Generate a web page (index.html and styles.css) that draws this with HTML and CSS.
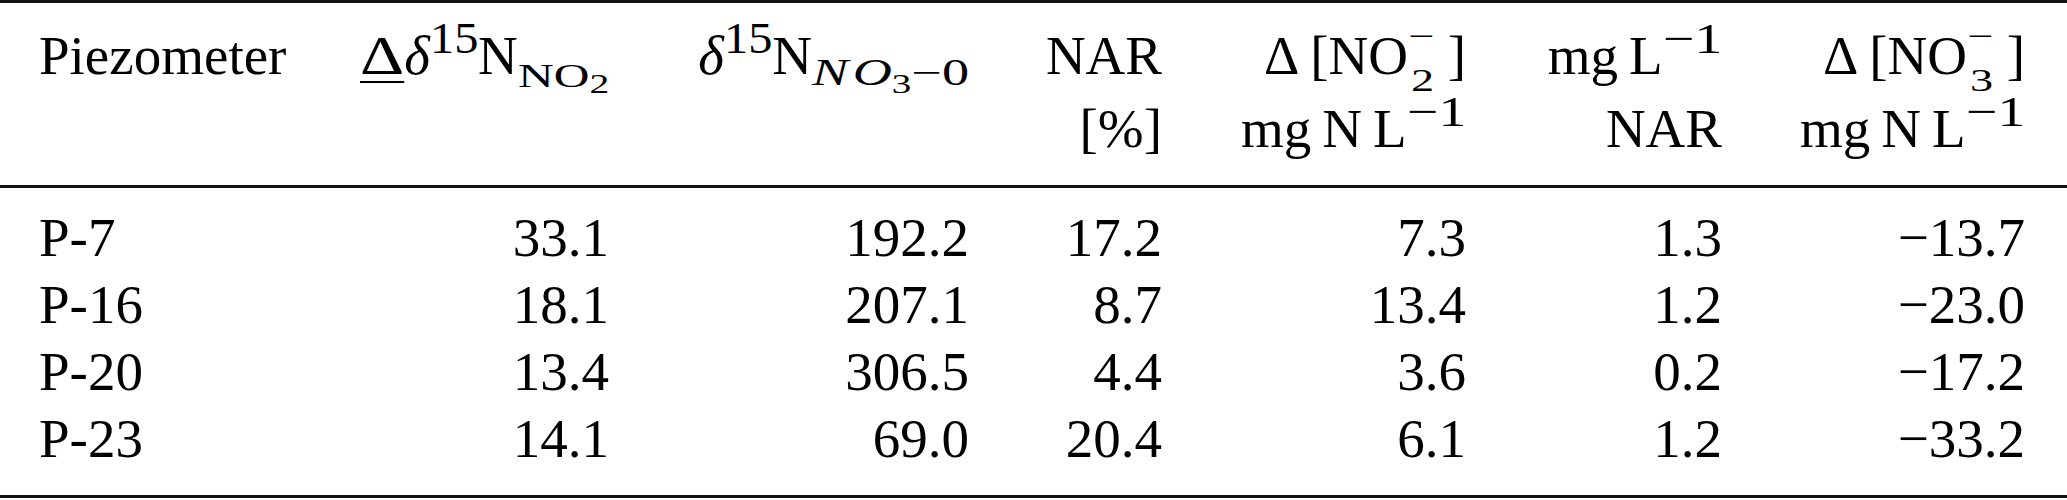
FILE: index.html
```html
<!DOCTYPE html>
<html lang="en">
<head>
  <meta charset="UTF-8">
  <title>Piezometer nitrite table</title>
  <link rel="stylesheet" href="styles.css">
</head>
<body>

  <table class="data-table">
    <colgroup>
      <col class="c1">
      <col class="c2">
      <col class="c3">
      <col class="c4">
      <col class="c5">
      <col class="c6">
      <col class="c7">
    </colgroup>
    <thead>
      <tr>
        <th class="first">Piezometer</th>
        <th><span class="ul">&Delta;</span><i>&delta;</i><sup class="iso">15</sup>N<sub class="sub-no">NO<sub>2</sub></sub></th>
        <th><i>&delta;</i><sup class="iso">15</sup>N<sub class="sub-no3"><i>N&#8202;O</i><sub>3</sub>&minus;0</sub></th>
        <th>NAR<br>[%]</th>
        <th>&Delta; [NO<span class="ion"><span>&minus;</span><span>2</span></span>&nbsp;]<br>mg&thinsp;N&thinsp;L<sup>&minus;1</sup></th>
        <th>mg&thinsp;L<sup>&minus;1</sup><br>NAR</th>
        <th class="last">&Delta; [NO<span class="ion"><span>&minus;</span><span>3</span></span>&nbsp;]<br>mg&thinsp;N&thinsp;L<sup>&minus;1</sup></th>
      </tr>
    </thead>
    <tbody>
      <tr>
        <td class="first">P-7</td>
        <td>33.1</td>
        <td>192.2</td>
        <td>17.2</td>
        <td>7.3</td>
        <td>1.3</td>
        <td class="last">&minus;13.7</td>
      </tr>
      <tr>
        <td class="first">P-16</td>
        <td>18.1</td>
        <td>207.1</td>
        <td>8.7</td>
        <td>13.4</td>
        <td>1.2</td>
        <td class="last">&minus;23.0</td>
      </tr>
      <tr>
        <td class="first">P-20</td>
        <td>13.4</td>
        <td>306.5</td>
        <td>4.4</td>
        <td>3.6</td>
        <td>0.2</td>
        <td class="last">&minus;17.2</td>
      </tr>
      <tr>
        <td class="first">P-23</td>
        <td>14.1</td>
        <td>69.0</td>
        <td>20.4</td>
        <td>6.1</td>
        <td>1.2</td>
        <td class="last">&minus;33.2</td>
      </tr>
    </tbody>
  </table>

</body>
</html>
```

FILE: styles.css
```css
/* General */
body {
  margin: 0;
  background-color: #fff;
  color: #000;
  font-family: "Liberation Serif", "Times New Roman", serif;
}

/* Table */
.data-table {
  width: 2067px;
  table-layout: fixed;
  border-collapse: separate;
  border-spacing: 0;
  font-size: 55px;
}

.c1 { width: 300px; }
.c2 { width: 309px; }
.c3 { width: 360px; }
.c4 { width: 193px; }
.c5 { width: 304px; }
.c6 { width: 256px; }
.c7 { width: 345px; }

.data-table th,
.data-table td {
  padding: 0;
  text-align: right;
  vertical-align: top;
  font-weight: normal;
  white-space: nowrap;
}

.data-table .first {
  padding-left: 39px;
  text-align: left;
}

.data-table .last {
  padding-right: 42px;
}

/* Header */
.data-table thead th {
  line-height: 73px;
  padding-top: 16px;
  padding-bottom: 20px;
  border-top: 3px solid #111;
  border-bottom: 3px solid #111;
}

/* script glyphs in the source are drawn wide, so stretch them;
   margin-right gives back the extra width to the layout */
.data-table sup,
.data-table sub,
.ion,
.ul {
  display: inline-block;
  line-height: 0;
  transform-origin: 0 0;
}

.data-table sup {
  font-size: 0.78em;
  vertical-align: 21px;
  transform: scaleX(1.3);
  margin-right: 0.32em;
}

.data-table sup.iso {
  font-size: 0.8em;
  transform: scaleX(1.1);
  margin-right: 0.1em;
}

.data-table sub {
  vertical-align: -13px;
  transform: scaleX(1.45);
}

.data-table sub.sub-no {
  font-size: 0.62em;
  margin-right: 0.83em;
}

.data-table sub.sub-no3 {
  font-size: 0.68em;
  vertical-align: -11px;
  margin-right: 1.3em;
}

.data-table sub sub {
  display: inline;
  transform: none;
  font-size: 0.8em;
  vertical-align: -6px;
}

.data-table sub.sub-no3 sub {
  font-size: 0.72em;
  vertical-align: -8px;
}

.ul {
  line-height: inherit;
  text-decoration: underline;
  text-decoration-thickness: 2px;
  text-underline-offset: 7px;
  transform: scaleX(1.25);
  margin-right: 0.16em;
}

/* stacked charge and count, e.g. NO2- */
.ion {
  display: inline-flex;
  flex-direction: column;
  font-size: 0.58em;
  vertical-align: 27px;
  transform: scaleX(1.45);
  margin-right: 0.25em;
}

.ion span + span {
  margin-top: 1.38em;
}

/* Body rows */
.data-table tbody td {
  line-height: 67px;
}

.data-table tbody tr:first-child td {
  padding-top: 16px;
}

.data-table tbody tr:last-child td {
  padding-bottom: 23px;
  border-bottom: 3px solid #111;
}
```
